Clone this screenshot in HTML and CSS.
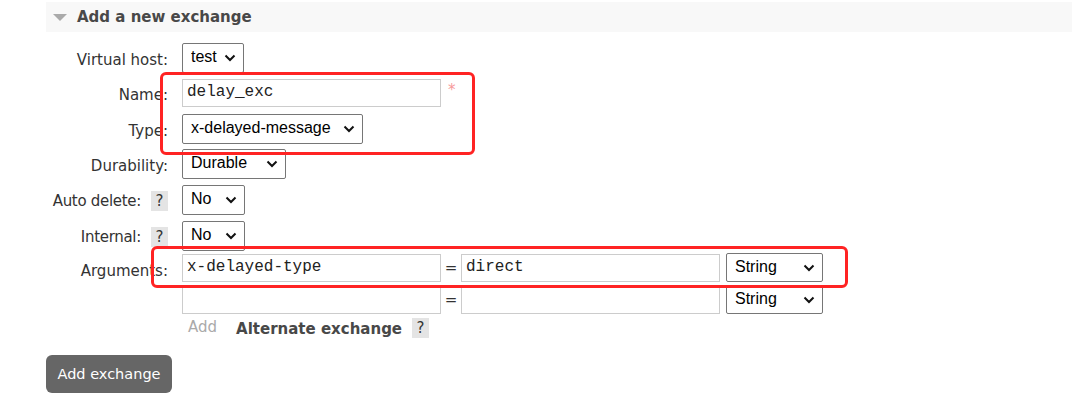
FILE: index.html
```html
<!DOCTYPE html>
<html lang="en">
<head>
    <meta charset="UTF-8">
    <meta name="viewport" content="width=device-width, initial-scale=1.0">
    <title>Add a new exchange</title>
    <link rel="stylesheet" href="styles.css">
</head>
<body>
    <div class="section">
        <h2 class="section-head"><span class="arrow"></span>Add a new exchange</h2>
        <form class="form" action="#" method="post">
            <div class="row row-vhost">
                <label class="lbl" for="vhost">Virtual host:</label>
                <select class="sel sel-vhost" id="vhost" name="vhost">
                    <option>test</option>
                </select>
            </div>
            <div class="row row-name">
                <label class="lbl" for="name">Name:</label>
                <input class="txt txt-wide" type="text" id="name" name="name" value="delay_exc">
                <span class="req">*</span>
            </div>
            <div class="row row-type">
                <label class="lbl" for="type">Type:</label>
                <select class="sel sel-type" id="type" name="type">
                    <option>x-delayed-message</option>
                </select>
            </div>
            <div class="row row-durable">
                <label class="lbl" for="durable">Durability:</label>
                <select class="sel sel-durable" id="durable" name="durable">
                    <option>Durable</option>
                </select>
            </div>
            <div class="row row-auto">
                <label class="lbl" for="auto_delete">Auto delete:<span class="help">?</span></label>
                <select class="sel sel-yn" id="auto_delete" name="auto_delete">
                    <option>No</option>
                </select>
            </div>
            <div class="row row-internal">
                <label class="lbl" for="internal">Internal:<span class="help">?</span></label>
                <select class="sel sel-yn" id="internal" name="internal">
                    <option>No</option>
                </select>
            </div>
            <div class="row row-args">
                <label class="lbl lbl-args">Arguments:</label>
                <div class="args">
                    <div class="arg">
                        <input class="txt txt-wide" type="text" name="arg_key_1" value="x-delayed-type">
                        <span class="eq">=</span>
                        <input class="txt txt-wide" type="text" name="arg_val_1" value="direct">
                        <select class="sel sel-argtype" name="arg_type_1"><option>String</option></select>
                    </div>
                    <div class="arg">
                        <input class="txt txt-wide" type="text" name="arg_key_2">
                        <span class="eq">=</span>
                        <input class="txt txt-wide" type="text" name="arg_val_2">
                        <select class="sel sel-argtype" name="arg_type_2"><option>String</option></select>
                    </div>
                    <div class="arg-links">
                        <span class="add-link">Add</span>
                        <span class="alt-link">Alternate exchange</span>
                        <span class="help">?</span>
                    </div>
                </div>
            </div>
            <button class="btn" type="submit">Add exchange</button>
        </form>
    </div>

    <!-- red annotation boxes drawn over the form -->
    <div class="mark mark-top"></div>
    <div class="mark mark-args"></div>
</body>
</html>
```

FILE: styles.css
```css
body {
    margin: 0;
    font-family: "DejaVu Sans", Verdana, sans-serif;
    font-size: 15px;
    color: #333;
    background: #fff;
}
.section {
    margin-left: 46px;
    padding-top: 2px;
}
.section-head {
    display: flex;
    align-items: center;
    height: 30px;
    margin: 0;
    padding-left: 7px;
    background: #f8f8f8;
    font-size: 15px;
    font-weight: bold;
    color: #484848;
}
.arrow {
    width: 0;
    height: 0;
    margin-right: 10px;
    margin-top: 1px;
    border-left: 7.5px solid transparent;
    border-right: 7.5px solid transparent;
    border-top: 7px solid #aaa;
}
.form {
    margin-top: 11px;
}
.row {
    display: flex;
    align-items: center;
}
.lbl {
    width: 122px;
    margin-right: 14px;
    padding-top: 4px;
    text-align: right;
    white-space: nowrap;
    color: #333;
}
.row-auto .lbl,
.row-internal .lbl {
    padding-top: 2px;
    letter-spacing: -0.3px;
}
.row-name { margin-top: 6px; }
.row-type { margin-top: 7px; }
.row-durable { margin-top: 5px; }
.row-auto { margin-top: 6px; }
.row-internal { margin-top: 6px; }
.row-args {
    margin-top: 2px;
    align-items: flex-start;
}
.lbl-args {
    padding-top: 9px;
}
.help {
    display: inline-block;
    width: 17px;
    height: 20px;
    margin-left: 10px;
    line-height: 20px;
    text-align: center;
    background: #e4e4e4;
    color: #333;
    font-size: 15px;
    letter-spacing: 0;
    vertical-align: middle;
}
.sel {
    appearance: none;
    -webkit-appearance: none;
    height: 30px;
    padding: 0 0 3px 8px;
    border: 1px solid #767676;
    border-radius: 2px;
    background: #fff url("data:image/svg+xml,%3Csvg xmlns='http://www.w3.org/2000/svg' width='12' height='8' viewBox='0 0 12 8'%3E%3Cpath d='M1.5 1.5 6 6l4.5-4.5' fill='none' stroke='%23111' stroke-width='2'/%3E%3C/svg%3E") no-repeat right 7px center;
    font-family: "Liberation Sans", Arial, sans-serif;
    font-size: 16px;
    color: #000;
}
.sel-vhost { width: 62px; }
.sel-type { width: 181px; }
.sel-durable { width: 104px; }
.sel-yn { width: 63px; }
.sel-argtype { width: 97px; height: 29px; margin-left: 6px; }
.txt {
    height: 28px;
    padding: 0 4px 2px;
    border: 1px solid #ccc;
    box-sizing: border-box;
    font-family: "Liberation Mono", "Courier New", monospace;
    font-size: 16px;
    color: #222;
    outline: none;
}
.txt-wide { width: 259px; }
.req {
    margin-left: 7px;
    margin-top: -6px;
    color: #f79a9a;
    font-size: 15px;
}
.args {
    display: flex;
    flex-direction: column;
    gap: 3px;
}
.arg {
    display: flex;
    align-items: center;
}
.eq {
    width: 20px;
    text-align: center;
    color: #333;
}
.arg-links {
    display: flex;
    align-items: center;
    height: 24px;
}
.add-link {
    margin-left: 6px;
    margin-top: -5px;
    color: #aaa;
}
.alt-link {
    margin-left: 19px;
    font-weight: bold;
    color: #484848;
}
.alt-link + .help {
    margin-left: 10px;
    margin-top: -3px;
}
.btn {
    display: block;
    margin-top: 14px;
    width: 126px;
    height: 38px;
    padding: 0;
    border: none;
    border-radius: 6px;
    background: #666;
    color: #fff;
    font-family: "DejaVu Sans", Verdana, sans-serif;
    font-size: 14.5px;
    cursor: pointer;
}
.mark {
    position: absolute;
    border: 3.5px solid #ff2323;
    border-radius: 6px;
    box-sizing: border-box;
    pointer-events: none;
}
.mark-top {
    left: 160px;
    top: 72px;
    width: 315px;
    height: 83px;
}
.mark-args {
    left: 151px;
    top: 246px;
    width: 697px;
    height: 42px;
}
```
